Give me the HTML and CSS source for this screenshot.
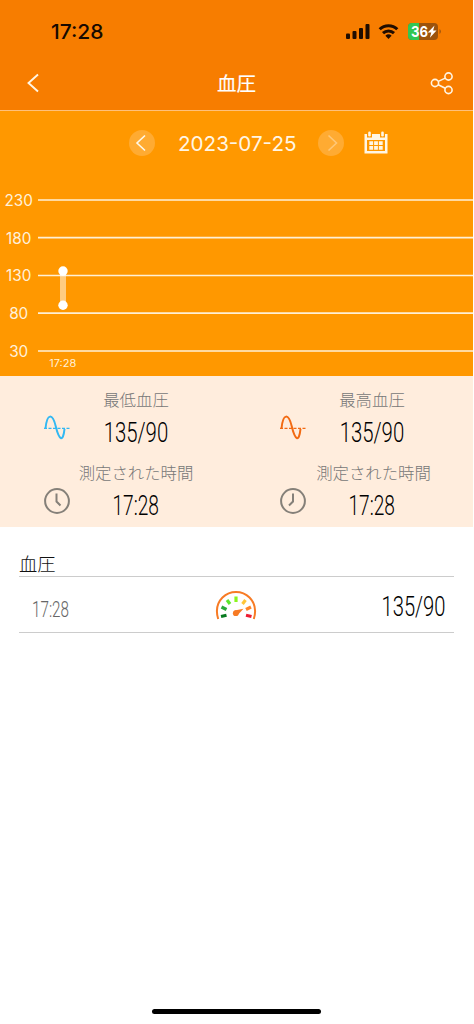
FILE: index.html
```html
<!DOCTYPE html>
<html lang="ja">
<head>
<meta charset="utf-8">
<meta name="viewport" content="width=device-width">
<title>血圧</title>
<link rel="stylesheet" href="styles.css">
</head>
<body>
<div class="screen">
  <header class="top">
    <div class="status">
      <svg class="clock-text" width="54" height="20"><text x="0" y="17" textLength="52.500" lengthAdjust="spacingAndGlyphs">17:28</text></svg>
      <svg class="indicators" width="96" height="20" viewBox="0 0 96 20">
        <rect x="0" y="12.5" width="4" height="5.5" rx="1"/>
        <rect x="6.5" y="10" width="4" height="8" rx="1"/>
        <rect x="13" y="7" width="4" height="11" rx="1"/>
        <rect x="19.5" y="3" width="4" height="15" rx="1"/>
        <g class="wifi">
          <path d="M33.7 8.3a12.5 12.5 0 0 1 17.6 0"/>
          <path d="M37 12.1a8 8 0 0 1 11 0"/>
        </g>
        <path d="M39.4 14.7a4.6 4.6 0 0 1 6.2 0L42.5 18z"/>
        <path class="cell" d="M66 2h22a4 4 0 0 1 4 4v9a4 4 0 0 1-4 4H66a4 4 0 0 1-4-4V6a4 4 0 0 1 4-4z"/>
        <path class="charge" d="M66 2h7v17h-7a4 4 0 0 1-4-4V6a4 4 0 0 1 4-4z"/>
        <path class="cell" d="M93.5 8a3 3 0 0 1 0 5z"/>
        <text class="level" x="65" y="16" textLength="17" lengthAdjust="spacingAndGlyphs">36</text>
        <path class="bolt" d="M88.5 4.5l-6.7 7h3.5l-1.4 5.3 6.6-7.2h-3.4z"/>
      </svg>
    </div>
    <nav class="nav">
      <svg class="line-icon back" width="14" height="20" viewBox="0 0 14 20"><path d="M13 1.500 3.500 10l9.500 8.500"/></svg>
      <h1>血圧</h1>
      <svg class="line-icon share" width="24" height="24" viewBox="0 0 24 24"><circle cx="5" cy="12" r="3.6"/><circle cx="18.5" cy="5.5" r="3.6"/><circle cx="18.5" cy="19" r="3.6"/><path d="M8.3 10.4l7-3.3M8.3 13.7l7 3.6"/></svg>
    </nav>
  </header>

  <section class="chart">
    <div class="datebar">
      <span class="round"><svg width="26" height="26" viewBox="0 0 26 26"><path d="M16 5.500 8 13l8 7.500"/></svg></span>
      <svg class="date" width="120" height="24"><text x="1" y="20" textLength="118.500" lengthAdjust="spacingAndGlyphs">2023-07-25</text></svg>
      <span class="round off"><svg width="26" height="26" viewBox="0 0 26 26"><path d="M10.500 5.500 18.500 13l-8 7.500"/></svg></span>
      <svg class="calendar" width="24" height="24" viewBox="0 0 24 24">
        <path fill-rule="evenodd" d="M.5 3H3v3.500h5V3h8v3.500h5V3h2.500v19.500H.5zM3 9v11h18V9z"/>
        <rect x="4.200" y="0.500" width="2.600" height="5" rx="1.300"/><rect x="17.200" y="0.500" width="2.600" height="5" rx="1.300"/>
        <path d="M5.300 10.300h3.800v3.800h-3.800zM10.100 10.300h3.800v3.800h-3.800zM14.900 10.300h3.800v3.800h-3.800zM5.300 15h3.800v3.800h-3.800zM10.100 15h3.800v3.800h-3.800zM14.900 15h3.800v3.800h-3.800z"/>
      </svg>
    </div>
    <svg class="plot" width="473" height="201" viewBox="0 175 473 201">
      <path class="grid" d="M38 200H473M38 237.600H473M38 275.500H473M38 313.200H473M38 351H473"/>
      <g class="axis">
        <text x="18.700" y="205.700">230</text><text x="18.700" y="243.500">180</text><text x="18.700" y="281.200">130</text><text x="18.700" y="319">80</text><text x="18.700" y="356.800">30</text>
      </g>
      <rect class="range" x="60" y="271" width="6" height="34"/>
      <circle class="dot" cx="63" cy="271" r="4.700"/><circle class="dot" cx="63" cy="305.200" r="4.700"/>
      <text class="tick" x="49.300" y="367" textLength="27" lengthAdjust="spacingAndGlyphs">17:28</text>
    </svg>
  </section>

  <section class="summary">
    <div class="card">
      <svg class="wave low" width="28" height="28" viewBox="0 0 28 28"><path d="M2.500 14.500C4-1 9.500-1 12.800 12.500S20 29 21.500 15"/><path class="dash" d="M1 14.300h26"/></svg>
      <div class="label">最低血圧</div>
      <svg class="value" width="66" height="28"><text x="0.700" y="24" textLength="64.500" lengthAdjust="spacingAndGlyphs">135/90</text></svg>
    </div>
    <div class="card">
      <svg class="wave high" width="28" height="28" viewBox="0 0 28 28"><path d="M2.500 14.500C4-1 9.500-1 12.800 12.500S20 29 21.500 15"/><path class="dash" d="M1 14.300h26"/></svg>
      <div class="label">最高血圧</div>
      <svg class="value" width="66" height="28"><text x="0.700" y="24" textLength="64.500" lengthAdjust="spacingAndGlyphs">135/90</text></svg>
    </div>
    <div class="card">
      <svg class="time" width="28" height="28" viewBox="0 0 28 28"><circle cx="14" cy="14" r="11.900"/><path d="M13.500 6.500v8l4 4"/></svg>
      <div class="label">測定された時間</div>
      <svg class="value" width="48" height="28"><text x="0.500" y="24" textLength="46.500" lengthAdjust="spacingAndGlyphs">17:28</text></svg>
    </div>
    <div class="card">
      <svg class="time" width="28" height="28" viewBox="0 0 28 28"><circle cx="14" cy="14" r="11.900"/><path d="M14 6.500v8l-4 4"/></svg>
      <div class="label shifted">測定された時間</div>
      <svg class="value" width="48" height="28"><text x="0.500" y="24" textLength="46.500" lengthAdjust="spacingAndGlyphs">17:28</text></svg>
    </div>
  </section>

  <section class="history">
    <h2>血圧</h2>
    <div class="row">
      <svg class="row-time" width="38" height="28"><text x="0" y="26" textLength="37" lengthAdjust="spacingAndGlyphs">17:28</text></svg>
      <svg class="gauge" width="42" height="32" viewBox="0 0 42 32">
        <path class="arc" d="M3.200 29C2.200 26 1.900 23.500 1.900 21A19.100 19.100 0 0 1 40.100 21C40.100 23.500 39.800 26 38.800 29"/>
        <g class="marks">
          <path stroke="#087b20" d="M6 26.500l5.500-1.300"/>
          <path stroke="#28aa36" d="M6.500 17l5 2.500"/>
          <path stroke="#5ce72b" d="M12 10l3 4"/>
          <path stroke="#8af51d" d="M21 6.500v5.500"/>
          <path stroke="#ffc638" d="M30.500 10l-3 4"/>
          <path stroke="#ff8429" d="M36 17l-5 2.500"/>
          <path stroke="#ed1c32" d="M36.500 26.500l-5.500-1.300"/>
        </g>
        <path class="needle" d="M28.500 18.800 22.700 25 19.500 20.500z"/><circle class="needle" cx="20.800" cy="23.200" r="2.900"/>
      </svg>
      <svg class="row-value" width="66" height="28"><text x="1.500" y="25" textLength="64" lengthAdjust="spacingAndGlyphs">135/90</text></svg>
    </div>
  </section>
  <div class="home"></div>
</div>
</body>
</html>
```
FILE: styles.css
```css
* { box-sizing: border-box; }
body { margin: 0; background: #fff; font-family: Inter, "Noto Sans CJK JP", sans-serif; }
svg { display: block; overflow: visible; flex: none; }
.screen { width: 473px; height: 1024px; display: flex; flex-direction: column; }
h1, h2 { margin: 0; font-family: "Noto Sans CJK JP", sans-serif; }

.top { height: 111px; background: #f77d00; border-bottom: 1px solid #ffc17a; }
.status { height: 58px; padding: 21px 31px 0 51px; display: flex; justify-content: space-between; }
.clock-text { font-size: 20px; font-weight: 500; fill: #160900; margin-top: 1px; }
.indicators { fill: #200d00; }
.wifi path { fill: none; stroke: #200d00; stroke-width: 3; }
.indicators .cell { fill: #9c530c; }
.indicators .charge { fill: #32c653; }
.indicators .level { fill: #fff; font-size: 15px; font-weight: 700; }
.indicators .bolt { fill: #fff; }
.nav { height: 50px; padding: 0 19px 0 25px; display: grid; grid-template-columns: 48px 1fr 54px; align-items: center; }
.nav h1 { text-align: center; color: #fff; font-size: 19.500px; line-height: 26px; font-weight: 400; -webkit-text-stroke: .15px #fff; }
.line-icon { fill: none; stroke: #fff5e3; stroke-width: 1.900; }
.share { justify-self: end; stroke-width: 1.600; }

.chart { height: 265px; background: #ff9800; }
.datebar { height: 64px; padding-left: 129px; display: flex; align-items: center; }
.round { width: 26px; height: 26px; border-radius: 50%; background: #ffab32; }
.round path { fill: none; stroke: #fff8e8; stroke-width: 1.600; }
.round.off path { stroke: #ffc777; }
.date { margin: 0 21px 0 22px; font-size: 20.700px; fill: #fff6e5; }
.calendar { margin-left: 19.500px; fill: #fff6e5; }
.grid { stroke: #fff0d5; stroke-width: 1.700; }
.axis { font-size: 15.300px; text-anchor: middle; fill: #fff1da; }
.range { fill: #fff; opacity: .5; }
.dot { fill: #fff; }
.tick { font-size: 9.700px; fill: #fff1da; }

.summary { height: 151px; padding-top: 13px; background: #ffeddd; display: grid; grid-template-columns: 236px 236px; grid-template-rows: 73px 64px; }
.card { display: grid; grid-template-columns: 28px 128px; grid-template-rows: 21px 28px; column-gap: 7px; padding-left: 43px; justify-items: center; align-content: start; }
.wave, .time { grid-column: 1; grid-row: 1 / 3; margin-top: 25px; }
.label { margin-right: 12px; grid-column: 2; grid-row: 1; white-space: nowrap; font: 300 16.400px/21px "Noto Sans CJK JP", sans-serif; color: #777; }
.label.shifted { margin-right: 9px; }
.value { margin-top: 8px; margin-right: 12px; grid-column: 2; grid-row: 2; font: 350 28px Roboto, sans-serif; fill: #000; }
.wave { fill: none; stroke-width: 2; }
.low { stroke: #32b8f2; }
.high { stroke: #f26a12; }
.dash { stroke-width: 1.300; stroke-dasharray: 3 1.500; }
.time { fill: none; stroke: #858079; stroke-width: 2; }

.history { padding: 23px 19px 0; }
.history h2 { height: 27px; font-size: 18.300px; line-height: 26px; font-weight: 300; color: #111; border-bottom: 1px solid #ccc; }
.row { height: 56px; border-bottom: 1px solid #ccc; padding: 0 8px 0 13px; display: flex; align-items: center; justify-content: space-between; }
.row-time { font: 300 22px Roboto, sans-serif; fill: #666; }
.gauge { margin: 3px 0 0 21px; }
.row-value { font: 300 27px Roboto, sans-serif; fill: #000; }
.arc { fill: none; stroke: #f77b25; stroke-width: 2; }
.marks path { fill: none; stroke-width: 3.200; }
.needle { fill: #f77b25; }
.home { width: 169px; height: 5px; margin: auto auto 10px 152px; border-radius: 3px; background: #000; }
```
